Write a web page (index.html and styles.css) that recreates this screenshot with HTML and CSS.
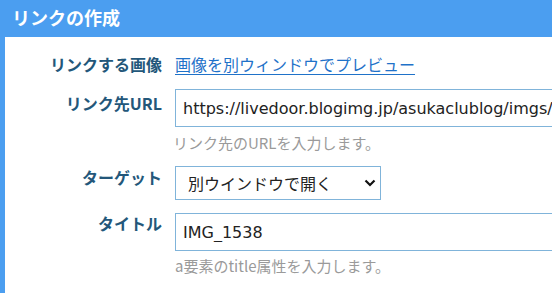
FILE: index.html
```html
<!DOCTYPE html>
<html lang="ja">
<head>
<meta charset="utf-8">
<link rel="stylesheet" href="styles.css">
</head>
<body>
<div class="dialog">
  <div class="header">リンクの作成</div>
  <div class="content">
    <div class="field field-link">
      <div class="label">リンクする画像</div>
      <div class="value"><a class="preview" href="#">画像を別ウィンドウでプレビュー</a></div>
    </div>
    <div class="field field-url">
      <div class="label label-url">リンク先URL</div>
      <div class="value">
        <input class="text" type="text" value="https://livedoor.blogimg.jp/asukaclublog/imgs/a/b/IMG_1538.jpg">
        <div class="hint hint-url">リンク先のURLを入力します。</div>
      </div>
    </div>
    <div class="field field-target">
      <div class="label label-target">ターゲット</div>
      <div class="value">
        <div class="select-wrap">
          <select class="select"><option>別ウインドウで開く</option></select>
          <svg class="chevron" width="12" height="8" viewBox="0 0 12 8"><path d="M1.5 1.5 L6 6 L10.5 1.5" fill="none" stroke="#111" stroke-width="2.2"/></svg>
        </div>
      </div>
    </div>
    <div class="field field-title">
      <div class="label label-title">タイトル</div>
      <div class="value">
        <input class="text" type="text" value="IMG_1538">
        <div class="hint hint-title">a要素のtitle属性を入力します。</div>
      </div>
    </div>
  </div>
</div>
</body>
</html>
```

FILE: styles.css
```css
html, body {
  margin: 0;
  padding: 0;
  background: #fff;
  overflow: hidden;
}
body {
  font-family: "DejaVu Sans", "Noto Sans CJK JP", sans-serif;
  width: 552px;
  height: 293px;
}
.dialog {
  display: flex;
  flex-direction: column;
  height: 293px;
}
.header {
  background: #4b9ef0;
  color: #fff;
  font-weight: bold;
  font-size: 18px;
  height: 37px;
  line-height: 35px;
  padding-left: 12px;
  font-family: "Noto Sans CJK JP", sans-serif;
}
.content {
  flex: 1;
  border-left: 5px solid #4b9ef0;
  padding-top: 15px;
}
.field {
  display: grid;
  grid-template-columns: 157px 1fr;
  column-gap: 13px;
  align-items: start;
}
.label {
  text-align: right;
  color: #23577a;
  font-weight: bold;
  font-size: 16px;
  line-height: 24px;
  font-family: "Noto Sans CJK JP", sans-serif;
}
.label-url { margin-top: 2px; }
.label-target { margin-top: -1px; }
.label-title { margin-top: -2px; }
.value {
  min-width: 0;
}
.field-link { margin-bottom: 13px; }
.field-url { margin-bottom: 13px; }
.field-target { margin-bottom: 13px; }
.preview {
  color: #1f72c9;
  font-size: 16px;
  line-height: 24px;
  font-family: "Noto Sans CJK JP", sans-serif;
  text-decoration: underline;
  text-underline-offset: 3px;
}
.text {
  display: block;
  box-sizing: border-box;
  width: 100%;
  height: 38px;
  margin: 0;
  border: 1px solid #80b4da;
  border-right: none;
  border-radius: 0;
  padding: 0 0 0 7px;
  font-family: "DejaVu Sans", "Noto Sans CJK JP", sans-serif;
  font-size: 16px;
  color: #222;
  outline: none;
  background: #fff;
}
.hint {
  color: #9a9a9a;
  font-size: 15px;
  line-height: 20px;
  font-family: "Noto Sans CJK JP", sans-serif;
}
.hint-url { margin-top: 6px; margin-left: -2px; }
.hint-title { margin-top: 5px; }
.select-wrap {
  position: relative;
  width: 206px;
  height: 34px;
}
.select {
  appearance: none;
  -webkit-appearance: none;
  box-sizing: border-box;
  width: 206px;
  height: 34px;
  margin: 0;
  border: 1px solid #80b4da;
  border-radius: 0;
  background: #fff;
  padding: 0 0 0 12px;
  font-family: "Noto Sans CJK JP", sans-serif;
  font-size: 16px;
  color: #222;
  outline: none;
}
.chevron {
  position: absolute;
  left: 189px;
  top: 13px;
  pointer-events: none;
}
```
